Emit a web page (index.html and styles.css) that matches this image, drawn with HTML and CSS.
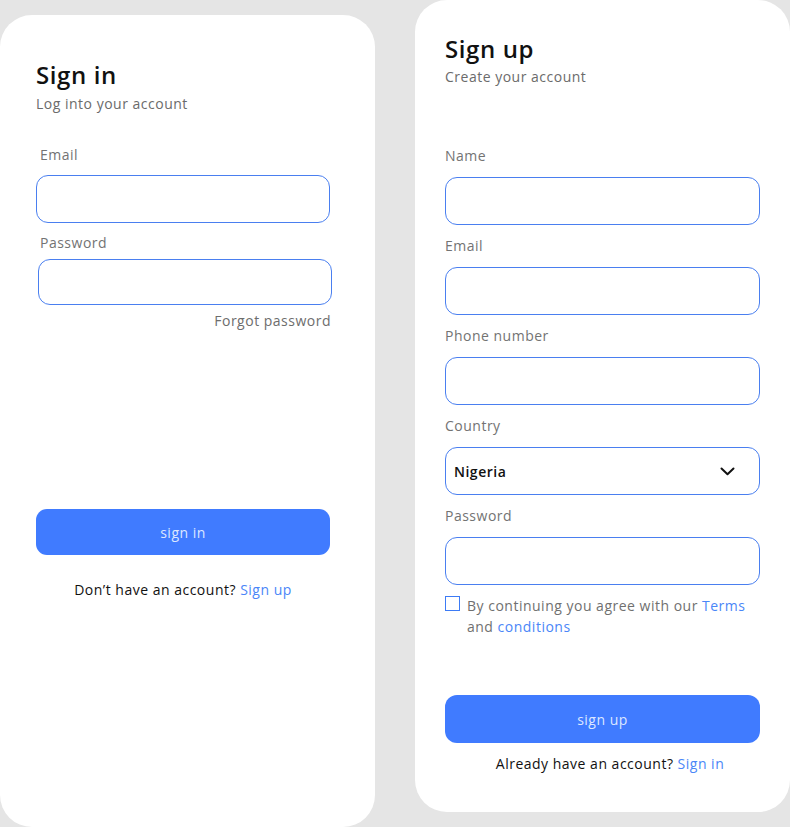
FILE: index.html
```html
<!DOCTYPE html>
<html lang="en">
<head>
<meta charset="utf-8">
<title>Sign in / Sign up</title>
<link rel="stylesheet" href="styles.css">
</head>
<body>
<div class="page">
  <section class="card card-signin">
    <h1 class="title">Sign in</h1>
    <p class="subtitle">Log into your account</p>

    <label class="label label-indent l-email">Email</label>
    <input class="field f-email" type="email">

    <label class="label label-indent l-pass">Password</label>
    <input class="field f-pass" type="password">

    <div class="forgot">Forgot password</div>

    <button class="btn btn-signin" type="button">sign in</button>

    <p class="alt alt-signin">Don’t have an account? <a class="link" href="#">Sign up</a></p>
  </section>

  <section class="card card-signup">
    <h1 class="title title-up">Sign up</h1>
    <p class="subtitle subtitle-up">Create your account</p>

    <div class="form-up">
      <label class="label">Name</label>
      <input class="field field-up" type="text">

      <label class="label">Email</label>
      <input class="field field-up" type="email">

      <label class="label">Phone number</label>
      <input class="field field-up" type="tel">

      <label class="label">Country</label>
      <div class="field field-up select">
        <span class="select-value">Nigeria</span>
        <svg class="chevron" width="15" height="9" viewBox="0 0 15 9" aria-hidden="true">
          <path d="M1.5 1.5 L7.5 7.2 L13.5 1.5" fill="none" stroke="#111" stroke-width="2" stroke-linecap="round" stroke-linejoin="round"/>
        </svg>
      </div>

      <label class="label">Password</label>
      <input class="field field-up" type="password">
    </div>

    <div class="terms">
      <span class="checkbox"></span>
      <p class="terms-text">By continuing you agree with our <a class="link" href="#">Terms</a><br>and <a class="link" href="#">conditions</a></p>
    </div>

    <button class="btn btn-signup" type="button">sign up</button>

    <p class="alt alt-signup">Already have an account? <a class="link" href="#">Sign in</a></p>
  </section>
</div>
</body>
</html>
```

FILE: styles.css
```css
* { box-sizing: border-box; }

html, body {
  margin: 0;
  padding: 0;
  background: #e5e5e5;
}

body {
  font-family: "Open Sans", "Noto Sans", Arial, sans-serif;
  color: #111;
  width: 790px;
  height: 827px;
  overflow: hidden;
  letter-spacing: 0.5px;
}

.page {
  display: flex;
  align-items: flex-start;
  gap: 40px;
}

.card {
  width: 375px;
  height: 812px;
  background: #fff;
  border-radius: 32px;
  display: flex;
  flex-direction: column;
  align-items: flex-start;
}

.card-signin {
  margin-top: 15px;
  padding: 44px 36px 0 36px;
}

.card-signup {
  padding: 33px 30px 0 30px;
}

.title {
  margin: 0;
  font-size: 24px;
  line-height: 32px;
  font-weight: 600;
  letter-spacing: 0.6px;
  color: #111;
}

.subtitle {
  margin: 3px 0 0 0;
  font-size: 14px;
  line-height: 20px;
  color: #6b6b6b;
}

.subtitle-up { margin-top: 2px; }

.label {
  display: block;
  font-size: 14px;
  line-height: 20px;
  color: #737373;
}

.label-indent { padding-left: 4px; }

.l-email { margin-top: 31px; }
.l-pass { margin-top: 10px; }

.field {
  display: block;
  width: 294px;
  height: 48px;
  border: 1px solid #4a7ff0;
  border-radius: 12px;
  background: #fff;
  outline: none;
  margin: 10px 0 0 0;
  padding: 0 8px;
  font: inherit;
}

.f-pass {
  margin-top: 6px;
  margin-left: 2px;
  height: 46px;
}

.forgot {
  align-self: flex-end;
  margin-top: 6px;
  margin-right: 8px;
  font-size: 14px;
  line-height: 20px;
  color: #6d6d6d;
}

.btn {
  width: 294px;
  height: 46px;
  border: none;
  border-radius: 11px;
  background: #407bff;
  color: #dde7ff;
  font: inherit;
  font-size: 14px;
  letter-spacing: 0.5px;
  cursor: pointer;
}

.btn-signin { margin-top: 178px; }

.alt {
  margin: 0;
  font-size: 14px;
  line-height: 20px;
  color: #111;
  text-align: center;
}

.alt-signin {
  width: 294px;
  margin-top: 25px;
}

.link {
  color: #4a86f8;
  text-decoration: none;
}

/* sign up */
.form-up {
  margin-top: 59px;
  display: flex;
  flex-direction: column;
}

.form-up .label + .field { margin-top: 11px; }
.form-up .field + .label { margin-top: 11px; }

.field-up {
  width: 315px;
  height: 48px;
}

.select {
  display: flex;
  align-items: center;
  justify-content: space-between;
  padding: 0 24px 0 8px;
}

.select-value {
  font-size: 14px;
  font-weight: 600;
  color: #111;
}

.chevron { display: block; }

.terms {
  display: flex;
  align-items: flex-start;
  gap: 7px;
  margin-top: 10px;
}

.checkbox {
  width: 15px;
  height: 15px;
  border: 1.5px solid #3d7bf5;
  margin-top: 1px;
  flex-shrink: 0;
}

.terms-text {
  margin: 0;
  font-size: 14px;
  line-height: 21px;
  color: #707070;
}

.btn-signup {
  width: 315px;
  height: 48px;
  border-radius: 12px;
  margin-top: 58px;
}

.alt-signup {
  width: 315px;
  margin-top: 11px;
  padding-left: 15px;
}
```
